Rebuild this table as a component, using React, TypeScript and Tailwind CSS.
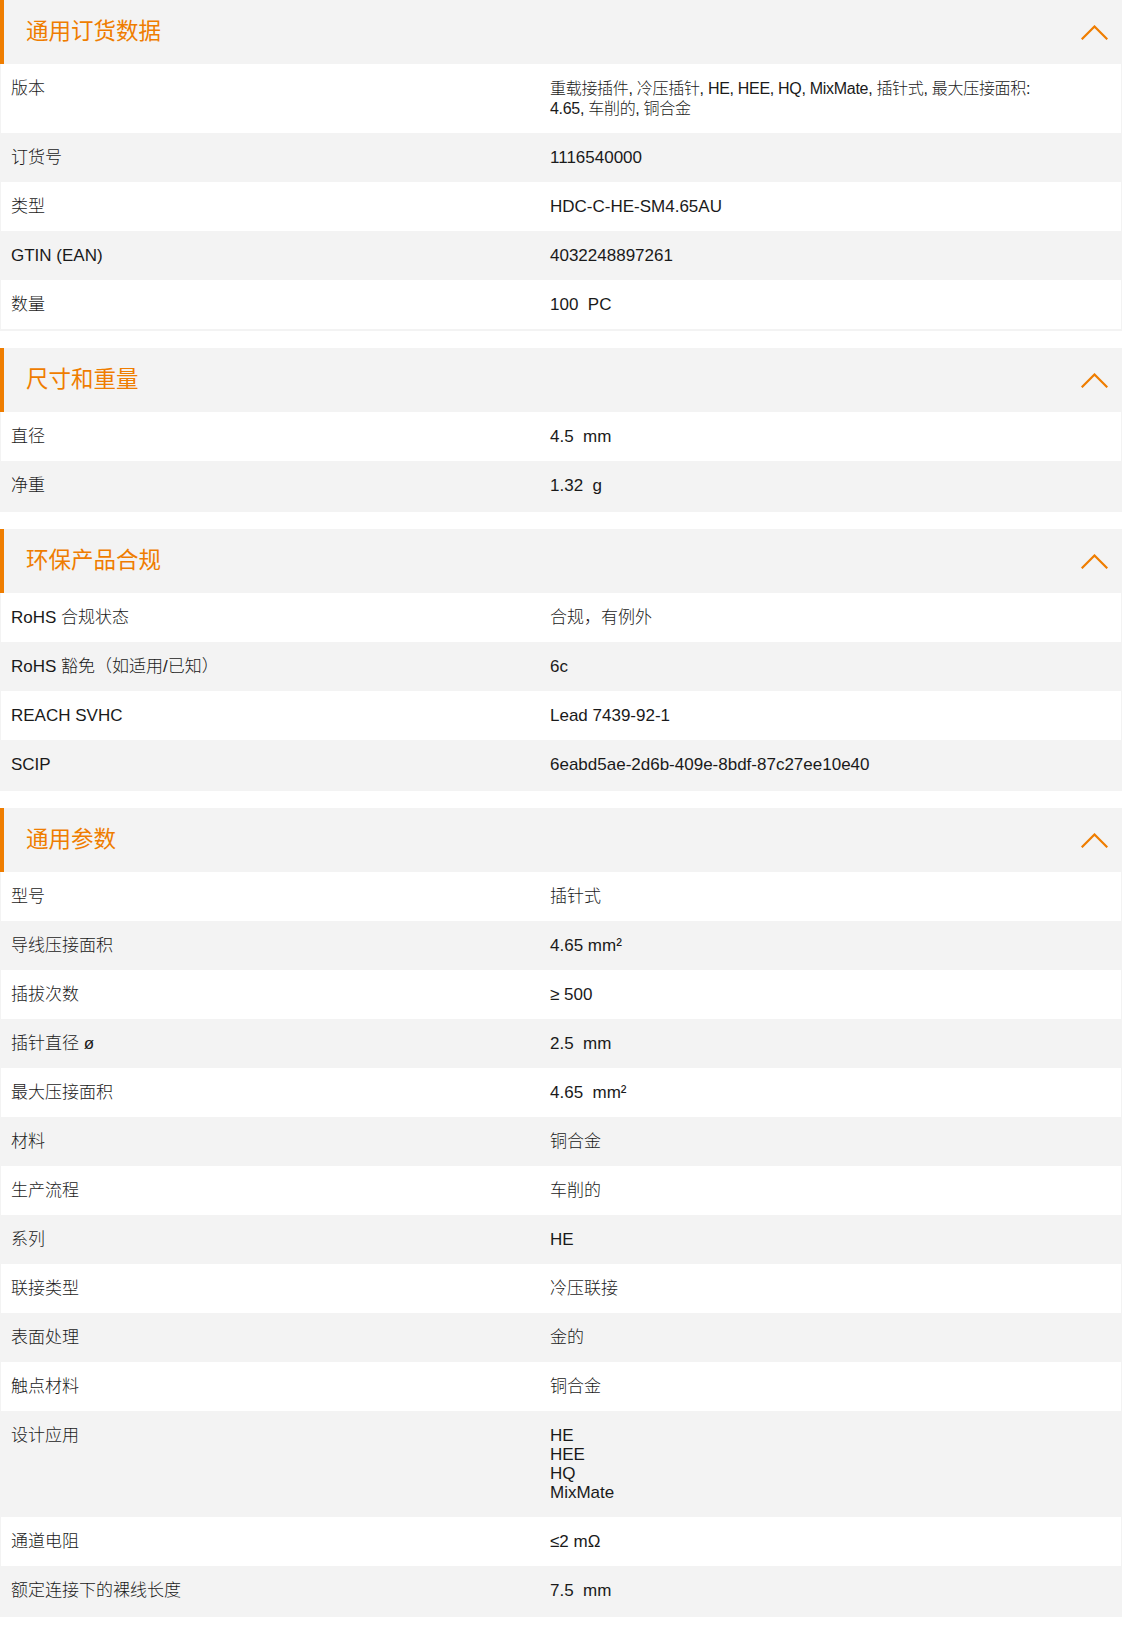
import React from "react";

type Row = { label: string; value: React.ReactNode; small?: boolean };
type Section = { title: string; rows: Row[] };

const sections: Section[] = [
    {
        title: "通用订货数据",
        rows: [
            {
                label: "版本",
                value: (
                    <>
                        重载接插件, 冷压插针, HE, HEE, HQ, MixMate, 插针式, 最大压接面积:
                        <br />
                        4.65, 车削的, 铜合金
                    </>
                ),
                small: true,
            },
            { label: "订货号", value: "1116540000" },
            { label: "类型", value: "HDC-C-HE-SM4.65AU" },
            { label: "GTIN (EAN)", value: "4032248897261" },
            { label: "数量", value: "100  PC" },
        ],
    },
    {
        title: "尺寸和重量",
        rows: [
            { label: "直径", value: "4.5  mm" },
            { label: "净重", value: "1.32  g" },
        ],
    },
    {
        title: "环保产品合规",
        rows: [
            { label: "RoHS 合规状态", value: "合规，有例外" },
            { label: "RoHS 豁免（如适用/已知）", value: "6c" },
            { label: "REACH SVHC", value: "Lead 7439-92-1" },
            { label: "SCIP", value: "6eabd5ae-2d6b-409e-8bdf-87c27ee10e40" },
        ],
    },
    {
        title: "通用参数",
        rows: [
            { label: "型号", value: "插针式" },
            { label: "导线压接面积", value: "4.65 mm²" },
            { label: "插拔次数", value: "≥ 500" },
            { label: "插针直径 ø", value: "2.5  mm" },
            { label: "最大压接面积", value: "4.65  mm²" },
            { label: "材料", value: "铜合金" },
            { label: "生产流程", value: "车削的" },
            { label: "系列", value: "HE" },
            { label: "联接类型", value: "冷压联接" },
            { label: "表面处理", value: "金的" },
            { label: "触点材料", value: "铜合金" },
            { label: "设计应用", value: "HE\nHEE\nHQ\nMixMate" },
            { label: "通道电阻", value: "≤2 mΩ" },
            { label: "额定连接下的裸线长度", value: "7.5  mm" },
        ],
    },
];

function Chevron() {
    return (
        <svg width="27" height="15" viewBox="0 0 27 15" fill="none" className="shrink-0">
            <polyline
                points="1.5,13.5 13.5,1.5 25.5,13.5"
                stroke="#ef7d00"
                strokeWidth="2.2"
                strokeLinecap="square"
            />
        </svg>
    );
}

function SpecSection({ section }: { section: Section }) {
    return (
        <div className="mb-[17px]">
            <div className="flex h-16 items-center justify-between border-l-4 border-[#ef7d00] bg-[#f3f3f3] pl-[22px] pr-[14px]">
                <h2 className="text-[22.5px] font-normal leading-none text-[#ef7d00]">{section.title}</h2>
                <Chevron />
            </div>
            <div className="border-x border-b-2 border-[#f3f3f3]">
                {section.rows.map((row, i) => (
                    <div
                        key={row.label}
                        className={`grid grid-cols-[538px_1fr] py-[15px] text-[17px] font-light leading-[19px] text-[#1a1a1a] ${
                            i % 2 === 1 ? "bg-[#f3f3f3]" : "bg-white"
                        }`}
                    >
                        <div className="pl-[10px]">{row.label}</div>
                        <div
                            className={`whitespace-pre-wrap pl-[11px] pr-4 ${
                                row.small ? "text-[16px] leading-[19.5px] tracking-[-0.3px]" : ""
                            }`}
                        >
                            {row.value}
                        </div>
                    </div>
                ))}
            </div>
        </div>
    );
}

export default function App() {
    return (
        <div className="min-h-screen w-full bg-white font-['Liberation_Sans','Noto_Sans_CJK_SC',sans-serif]">
            {sections.map((s) => (
                <SpecSection key={s.title} section={s} />
            ))}
        </div>
    );
}
